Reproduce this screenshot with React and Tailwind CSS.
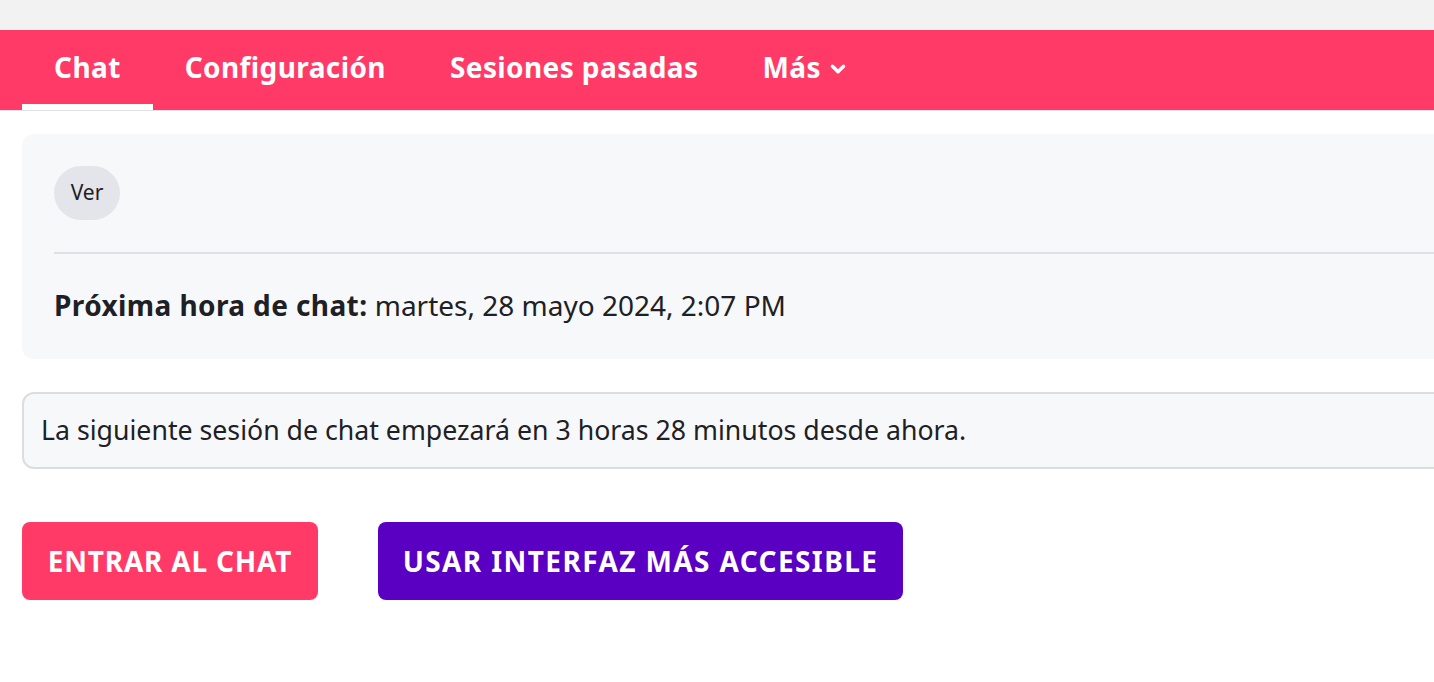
import React from 'react';
import { ChevronDown } from 'lucide-react';

const tabs = ['Chat', 'Configuración', 'Sesiones pasadas'];

export default function App() {
    return (
        <div className="w-full h-[682px] overflow-hidden bg-white text-[#1d2125]" style={{ fontFamily: '"Noto Sans", "Open Sans", sans-serif' }}>
            {/* top strip */}
            <div className="h-[30px] bg-[#f2f2f2]" />

            {/* secondary nav */}
            <nav className="h-[81px] bg-[#ff3a66] border-b border-[#dee2e6] flex pl-[22px]">
                {tabs.map((t, i) => (
                    <a
                        key={t}
                        className={`px-[32px] flex items-center text-[28px] font-bold tracking-[0.4px] text-white border-b-[6px] ${i === 0 ? 'border-white' : 'border-transparent'}`}
                    >
                        {t}
                    </a>
                ))}
                <a className="px-[32px] flex items-center gap-[6px] text-[28px] font-bold tracking-[0.4px] text-white border-b-[6px] border-transparent">
                    Más
                    <ChevronDown size={22} strokeWidth={3.8} className="mt-[4px]" />
                </a>
            </nav>

            <main className="pl-[22px] pt-[23px]">
                {/* activity header card */}
                <div className="w-[1500px] h-[225px] bg-[#f7f8fa] rounded-[12px] px-[32px] pt-[32px]">
                    <span className="inline-flex items-center justify-center w-[66px] h-[54px] rounded-full bg-[#e3e5ea] text-[21px]">
                        Ver
                    </span>
                    <hr className="mt-[32px] border-t-2 border-[#dee0e4]" />
                    <p className="mt-[33px] text-[28px] leading-[36px]">
                        <strong className="font-bold tracking-[0.4px]">Próxima hora de chat:</strong> martes, 28 mayo 2024, 2:07 PM
                    </p>
                </div>

                {/* notice */}
                <div className="mt-[33px] w-[1500px] h-[77px] bg-[#f7f8fa] border-2 border-[#dcdde0] rounded-[12px] px-[17px] flex items-center text-[26.7px]">
                    La siguiente sesión de chat empezará en 3 horas 28 minutos desde ahora.
                </div>

                {/* actions */}
                <div className="mt-[53px] flex gap-[60px]">
                    <button className="h-[78px] w-[296px] rounded-[8px] bg-[#ff3a66] text-white text-[28px] font-bold uppercase tracking-[0.8px]">
                        Entrar al chat
                    </button>
                    <button className="h-[78px] w-[525px] rounded-[8px] bg-[#5a00c2] text-white text-[28px] font-bold uppercase tracking-[1.4px]">
                        Usar interfaz más accesible
                    </button>
                </div>
            </main>
        </div>
    );
}
